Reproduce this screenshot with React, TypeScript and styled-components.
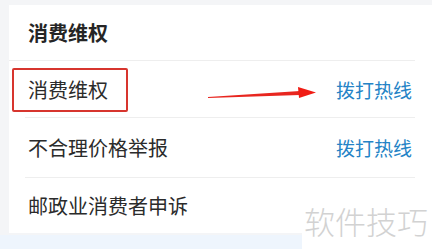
import React from "react";
import styled, { createGlobalStyle } from "styled-components";

const GlobalStyle = createGlobalStyle`
  html, body {
    margin: 0;
    padding: 0;
    background: #f4f5f7;
    font-family: "Noto Sans CJK SC", "Noto Sans", sans-serif;
  }
`;

const Page = styled.div`
  position: relative;
  width: 432px;
  height: 249px;
  overflow: hidden;
  padding: 5px 0 0 9px;
  box-sizing: border-box;
  background: #f4f5f7;
`;

const Card = styled.div`
  background: #ffffff;
  height: 228px;
`;

const Header = styled.div`
  height: 55px;
  display: flex;
  align-items: center;
  padding-left: 19px;
  font-size: 20px;
  font-weight: 600;
  color: #252525;
  border-bottom: 1px solid #eeeeee;
  margin-right: 17px;
`;

const Row = styled.div<{ $h: number; $last?: boolean }>`
  height: ${(p) => p.$h}px;
  display: flex;
  align-items: center;
  justify-content: space-between;
  margin: 0 17px 0 16px;
  padding: 0 3px;
  border-bottom: ${(p) => (p.$last ? "none" : "1px solid #eeeeee")};
`;

const Label = styled.span`
  font-size: 20px;
  color: #2b2b2b;
`;

const Action = styled.span`
  font-size: 19px;
  color: #2483c6;
`;

const Band = styled.div`
  margin-top: 2px;
  margin-left: -9px;
  height: 14px;
  background: #eef5fd;
`;

const Watermark = styled.div`
  position: absolute;
  right: 0;
  bottom: 0;
  width: 130px;
  height: 58px;
  background: #ffffff;
  display: flex;
  align-items: center;
  padding-left: 2px;
  box-sizing: border-box;
  font-size: 31px;
  font-weight: 300;
  color: #d2d2d2;
  white-space: nowrap;
`;

const Highlight = styled.div`
  position: absolute;
  left: 12px;
  top: 68px;
  width: 116px;
  height: 44px;
  border: 2px solid #d7352e;
  border-radius: 2px;
  box-sizing: border-box;
`;

const Arrow = styled.svg`
  position: absolute;
  left: 205px;
  top: 83px;
`;

const rows = [
  { label: "消费维权", action: "拨打热线", h: 56 },
  { label: "不合理价格举报", action: "拨打热线", h: 59 },
  { label: "邮政业消费者申诉", action: "", h: 55 },
];

export default function App() {
  return (
    <>
      <GlobalStyle />
      <Page>
        <Card>
          <Header>消费维权</Header>
          {rows.map((r, i) => (
            <Row key={i} $h={r.h} $last={i === rows.length - 1}>
              <Label>{r.label}</Label>
              {r.action && <Action>{r.action}</Action>}
            </Row>
          ))}
        </Card>
        <Band />
        <Highlight />
        <Arrow width="115" height="20" viewBox="0 0 115 20">
          <polygon points="3,14 95,8 95,12 3,15" fill="#e8261f" />
          <polygon points="93,4 111,9.5 94,15" fill="#f01c14" />
        </Arrow>
        <Watermark>软件技巧</Watermark>
      </Page>
    </>
  );
}
